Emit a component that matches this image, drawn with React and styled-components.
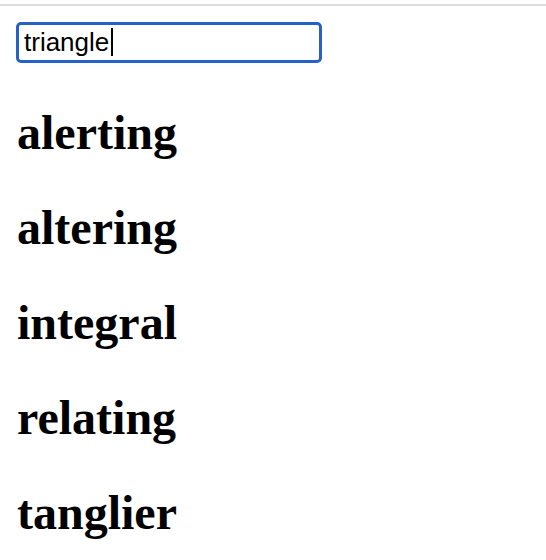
import React from "react";
import styled, { createGlobalStyle } from "styled-components";

const Global = createGlobalStyle`
  html, body { margin: 0; padding: 0; background: #ffffff; }
  body { font-family: "Liberation Serif", "Times New Roman", serif; color: #000; }
`;

const Page = styled.div`
  margin-top: 4px;
  border-top: 2px solid #dcdcdc;
  padding: 16px 0 0 16px;
`;

const Field = styled.label`
  display: flex;
  align-items: center;
  box-sizing: border-box;
  width: 306px;
  height: 41px;
  padding: 0 0 1px 5px;
  border: 3px solid #2462c8;
  border-radius: 5px;
  background: #fff;
  cursor: text;
`;

const Search = styled.input`
  field-sizing: content;
  min-width: 1px;
  margin: 0;
  padding: 0;
  border: none;
  outline: none;
  background: transparent;
  color: #000;
  caret-color: transparent;
  font-family: "Liberation Sans", Arial, sans-serif;
  font-size: 26px;
`;

const Caret = styled.span`
  display: block;
  width: 2px;
  height: 28px;
  margin-left: 2px;
  background: #000;
`;

const Results = styled.div`
  padding-left: 1px;
  padding-top: 1px;
`;

const Word = styled.h1`
  margin: 42px 0;
  font-family: "Liberation Serif", "Times New Roman", serif;
  font-size: 48px;
  line-height: 53px;
  font-weight: 700;
`;

const words = ["alerting", "altering", "integral", "relating", "tanglier"];

export default function App() {
  return (
    <>
      <Global />
      <Page>
        <Field>
          <Search type="text" defaultValue="triangle" spellCheck={false} />
          <Caret />
        </Field>
        <Results>
          {words.map((w) => (
            <Word key={w}>{w}</Word>
          ))}
        </Results>
      </Page>
    </>
  );
}
